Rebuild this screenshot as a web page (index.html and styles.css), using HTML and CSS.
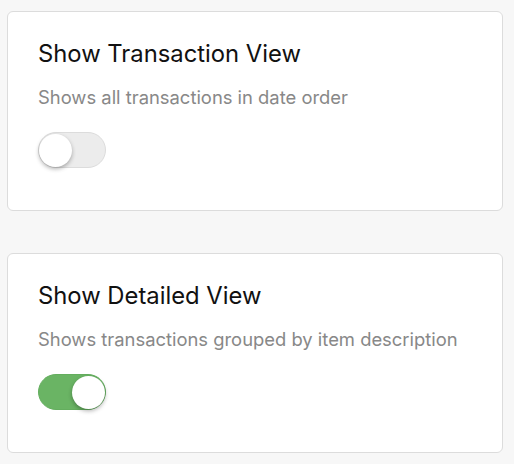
FILE: index.html
```html
<!DOCTYPE html>
<html lang="en">
<head>
<meta charset="utf-8">
<title>Views</title>
<link rel="stylesheet" href="styles.css">
</head>
<body>
<main class="list">
  <section class="card">
    <h2 class="card-title">Show Transaction View</h2>
    <p class="card-desc">Shows all transactions in date order</p>
    <div class="toggle" role="switch" aria-checked="false"><span class="knob"></span></div>
  </section>
  <section class="card">
    <h2 class="card-title">Show Detailed View</h2>
    <p class="card-desc">Shows transactions grouped by item description</p>
    <div class="toggle on" role="switch" aria-checked="true"><span class="knob"></span></div>
  </section>
</main>
</body>
</html>
```

FILE: styles.css
```css
html, body {
  margin: 0;
  background: #f7f7f7;
}
body {
  font-family: "Inter", "Open Sans", sans-serif;
  padding: 11px 11px 0 7px;
}
.list {
  display: flex;
  flex-direction: column;
  gap: 42px;
}
.card {
  width: 496px;
  box-sizing: border-box;
  background: #fff;
  border: 1px solid #dcdcdc;
  border-radius: 6px;
  padding: 28px 30px 42px;
}
.card-title {
  margin: 0;
  font-size: 23.8px;
  font-weight: 400;
  line-height: 28px;
  color: #111;
}
.card-desc {
  margin: 18px 0 0;
  font-size: 18.4px;
  line-height: 22px;
  color: #888;
}
.toggle {
  margin-top: 24px;
  width: 68px;
  height: 36px;
  box-sizing: border-box;
  border-radius: 18px;
  background: #ececec;
  border: 1px solid #dcdcdc;
  display: flex;
  align-items: center;
  justify-content: flex-start;
}
.toggle.on {
  background: #6ab464;
  border-color: #64ae5e;
  justify-content: flex-end;
}
.knob {
  width: 33px;
  height: 33px;
  border-radius: 50%;
  background: #fff;
  box-shadow: 0 2px 4px rgba(0, 0, 0, 0.3);
}
```
